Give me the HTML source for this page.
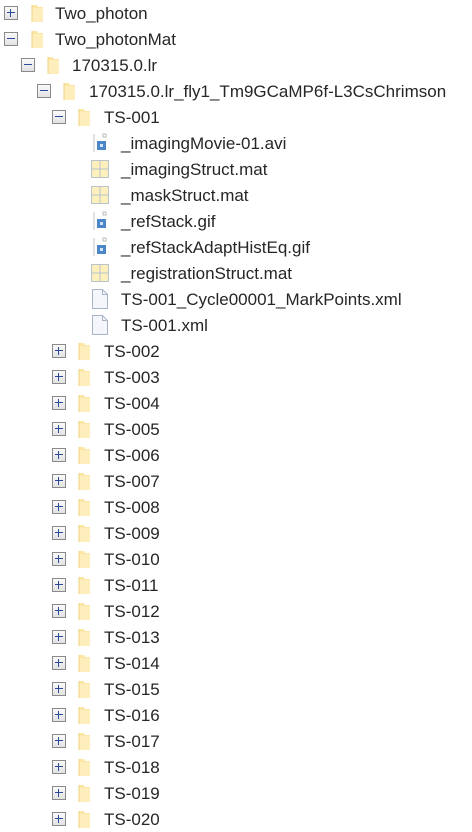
<!DOCTYPE html>
<html><head><meta charset="utf-8"><style>
body{margin:0;width:472px;height:831px;background:#fff;position:relative;overflow:hidden;font-family:"Liberation Sans",sans-serif;}
.r{position:absolute;left:0;height:26px;width:472px}
.t{position:absolute;top:4px;font-size:17px;color:#262626;white-space:nowrap;line-height:19px}
.b{position:absolute;top:6px;width:12px;height:12px;border:1px solid #8a8a8a;background:linear-gradient(#fafafa,#e2e2e2)}
.b:before{content:"";position:absolute;left:2px;top:5px;width:8px;height:1px;background:#2a4a9a}
.b.p:after{content:"";position:absolute;left:5px;top:2px;width:1px;height:8px;background:#2a4a9a}
.f{position:absolute;top:4px}
</style></head><body>
<svg width="0" height="0" style="position:absolute"><defs>
<symbol id="fo" viewBox="0 0 14 19"><path d="M1 1h5l1 2h5v15H1z" fill="#fbe6a6"/><path d="M1 4h11v14H1z" fill="#fdeebc"/><path d="M1 1v17" stroke="#f0d27e" stroke-width="1"/></symbol>
<symbol id="gr" viewBox="0 0 18 18"><rect x="0.5" y="0.5" width="17" height="17" fill="#fdf0bd" stroke="#b9c3cc"/><path d="M9 0.5v17M0.5 9h17" stroke="#b9c3cc"/></symbol>
<symbol id="dc" viewBox="0 0 16 20"><path d="M0.5 0.5h10l5 5v14H0.5z" fill="#f4f6fb" stroke="#a9b4c8"/><path d="M10.5 0.5v5h5" fill="none" stroke="#a9b4c8"/></symbol>
<symbol id="im" viewBox="0 0 16 20"><path d="M2 1v18" stroke="#c0c6cc"/><rect x="5" y="8" width="9" height="9" fill="#4a86c8"/><rect x="8" y="11" width="3" height="3" fill="#cfe2f5"/><rect x="11" y="1" width="3" height="3" fill="none" stroke="#bbb"/></symbol>
</defs></svg>

<div class="r" style="top:0"><div class="b p" style="left:4px"></div><svg class="f" style="left:31px" width="14" height="19"><use href="#fo"/></svg><div class="t" style="left:55px">Two_photon</div></div>
<div class="r" style="top:26px"><div class="b" style="left:4px"></div><svg class="f" style="left:31px" width="14" height="19"><use href="#fo"/></svg><div class="t" style="left:55px">Two_photonMat</div></div>
<div class="r" style="top:52px"><div class="b" style="left:21px"></div><svg class="f" style="left:47px" width="14" height="19"><use href="#fo"/></svg><div class="t" style="left:72px">170315.0.lr</div></div>
<div class="r" style="top:78px"><div class="b" style="left:37px"></div><svg class="f" style="left:63px" width="14" height="19"><use href="#fo"/></svg><div class="t" style="left:89px">170315.0.lr_fly1_Tm9GCaMP6f-L3CsChrimson</div></div>
<div class="r" style="top:104px"><div class="b" style="left:52px"></div><svg class="f" style="left:78px" width="14" height="19"><use href="#fo"/></svg><div class="t" style="left:104px">TS-001</div></div>

<div class="r" style="top:130px"><svg class="f" style="left:92px;top:3px" width="16" height="20"><use href="#im"/></svg><div class="t" style="left:121px">_imagingMovie-01.avi</div></div>
<div class="r" style="top:156px"><svg class="f" style="left:91px" width="18" height="18"><use href="#gr"/></svg><div class="t" style="left:121px">_imagingStruct.mat</div></div>
<div class="r" style="top:182px"><svg class="f" style="left:91px" width="18" height="18"><use href="#gr"/></svg><div class="t" style="left:121px">_maskStruct.mat</div></div>
<div class="r" style="top:208px"><svg class="f" style="left:92px;top:3px" width="16" height="20"><use href="#im"/></svg><div class="t" style="left:121px">_refStack.gif</div></div>
<div class="r" style="top:234px"><svg class="f" style="left:92px;top:3px" width="16" height="20"><use href="#im"/></svg><div class="t" style="left:121px">_refStackAdaptHistEq.gif</div></div>
<div class="r" style="top:260px"><svg class="f" style="left:91px" width="18" height="18"><use href="#gr"/></svg><div class="t" style="left:121px">_registrationStruct.mat</div></div>
<div class="r" style="top:286px"><svg class="f" style="left:92px;top:3px" width="16" height="20"><use href="#dc"/></svg><div class="t" style="left:121px">TS-001_Cycle00001_MarkPoints.xml</div></div>
<div class="r" style="top:312px"><svg class="f" style="left:92px;top:3px" width="16" height="20"><use href="#dc"/></svg><div class="t" style="left:121px">TS-001.xml</div></div>

<div class="r" style="top:338px"><div class="b p" style="left:52px"></div><svg class="f" style="left:78px" width="14" height="19"><use href="#fo"/></svg><div class="t" style="left:104px">TS-002</div></div>
<div class="r" style="top:364px"><div class="b p" style="left:52px"></div><svg class="f" style="left:78px" width="14" height="19"><use href="#fo"/></svg><div class="t" style="left:104px">TS-003</div></div>
<div class="r" style="top:390px"><div class="b p" style="left:52px"></div><svg class="f" style="left:78px" width="14" height="19"><use href="#fo"/></svg><div class="t" style="left:104px">TS-004</div></div>
<div class="r" style="top:416px"><div class="b p" style="left:52px"></div><svg class="f" style="left:78px" width="14" height="19"><use href="#fo"/></svg><div class="t" style="left:104px">TS-005</div></div>
<div class="r" style="top:442px"><div class="b p" style="left:52px"></div><svg class="f" style="left:78px" width="14" height="19"><use href="#fo"/></svg><div class="t" style="left:104px">TS-006</div></div>
<div class="r" style="top:468px"><div class="b p" style="left:52px"></div><svg class="f" style="left:78px" width="14" height="19"><use href="#fo"/></svg><div class="t" style="left:104px">TS-007</div></div>
<div class="r" style="top:494px"><div class="b p" style="left:52px"></div><svg class="f" style="left:78px" width="14" height="19"><use href="#fo"/></svg><div class="t" style="left:104px">TS-008</div></div>
<div class="r" style="top:520px"><div class="b p" style="left:52px"></div><svg class="f" style="left:78px" width="14" height="19"><use href="#fo"/></svg><div class="t" style="left:104px">TS-009</div></div>
<div class="r" style="top:546px"><div class="b p" style="left:52px"></div><svg class="f" style="left:78px" width="14" height="19"><use href="#fo"/></svg><div class="t" style="left:104px">TS-010</div></div>
<div class="r" style="top:572px"><div class="b p" style="left:52px"></div><svg class="f" style="left:78px" width="14" height="19"><use href="#fo"/></svg><div class="t" style="left:104px">TS-011</div></div>
<div class="r" style="top:598px"><div class="b p" style="left:52px"></div><svg class="f" style="left:78px" width="14" height="19"><use href="#fo"/></svg><div class="t" style="left:104px">TS-012</div></div>
<div class="r" style="top:624px"><div class="b p" style="left:52px"></div><svg class="f" style="left:78px" width="14" height="19"><use href="#fo"/></svg><div class="t" style="left:104px">TS-013</div></div>
<div class="r" style="top:650px"><div class="b p" style="left:52px"></div><svg class="f" style="left:78px" width="14" height="19"><use href="#fo"/></svg><div class="t" style="left:104px">TS-014</div></div>
<div class="r" style="top:676px"><div class="b p" style="left:52px"></div><svg class="f" style="left:78px" width="14" height="19"><use href="#fo"/></svg><div class="t" style="left:104px">TS-015</div></div>
<div class="r" style="top:702px"><div class="b p" style="left:52px"></div><svg class="f" style="left:78px" width="14" height="19"><use href="#fo"/></svg><div class="t" style="left:104px">TS-016</div></div>
<div class="r" style="top:728px"><div class="b p" style="left:52px"></div><svg class="f" style="left:78px" width="14" height="19"><use href="#fo"/></svg><div class="t" style="left:104px">TS-017</div></div>
<div class="r" style="top:754px"><div class="b p" style="left:52px"></div><svg class="f" style="left:78px" width="14" height="19"><use href="#fo"/></svg><div class="t" style="left:104px">TS-018</div></div>
<div class="r" style="top:780px"><div class="b p" style="left:52px"></div><svg class="f" style="left:78px" width="14" height="19"><use href="#fo"/></svg><div class="t" style="left:104px">TS-019</div></div>
<div class="r" style="top:806px"><div class="b p" style="left:52px"></div><svg class="f" style="left:78px" width="14" height="19"><use href="#fo"/></svg><div class="t" style="left:104px">TS-020</div></div>
</body></html>
